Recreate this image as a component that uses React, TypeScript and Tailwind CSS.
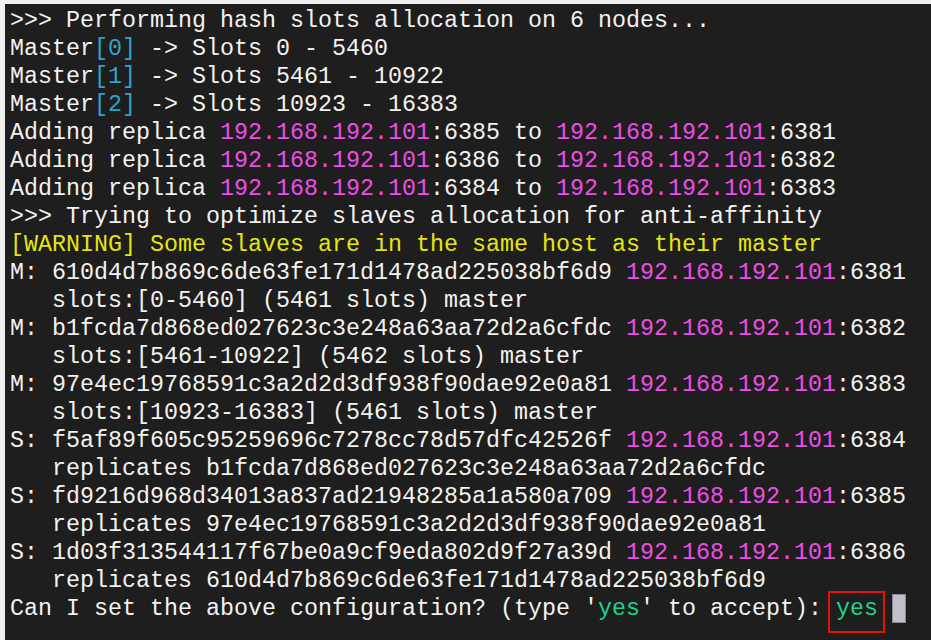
import React from "react";

const W = ({ children }: { children: React.ReactNode }) => <span>{children}</span>;
const C = ({ children }: { children: React.ReactNode }) => <span className="text-[#2ea3d0]">{children}</span>;
const P = ({ children }: { children: React.ReactNode }) => <span className="text-[#ec4dea]">{children}</span>;
const Y = ({ children }: { children: React.ReactNode }) => <span className="text-[#e5e512]">{children}</span>;
const G = ({ children }: { children: React.ReactNode }) => <span className="text-[#23d18b]">{children}</span>;

const IP = "192.168.192.101";

export default function App() {
  const lines: React.ReactNode[] = [
    <W>{">>> Performing hash slots allocation on 6 nodes..."}</W>,
    <>Master<C>[0]</C>{" -> Slots 0 - 5460"}</>,
    <>Master<C>[1]</C>{" -> Slots 5461 - 10922"}</>,
    <>Master<C>[2]</C>{" -> Slots 10923 - 16383"}</>,
    <>{"Adding replica "}<P>{IP}</P>{":6385 to "}<P>{IP}</P>{":6381"}</>,
    <>{"Adding replica "}<P>{IP}</P>{":6386 to "}<P>{IP}</P>{":6382"}</>,
    <>{"Adding replica "}<P>{IP}</P>{":6384 to "}<P>{IP}</P>{":6383"}</>,
    <>{">>> Trying to optimize slaves allocation for anti-affinity"}</>,
    <Y>{"[WARNING] Some slaves are in the same host as their master"}</Y>,
    <>{"M: 610d4d7b869c6de63fe171d1478ad225038bf6d9 "}<P>{IP}</P>{":6381"}</>,
    <>{"   slots:[0-5460] (5461 slots) master"}</>,
    <>{"M: b1fcda7d868ed027623c3e248a63aa72d2a6cfdc "}<P>{IP}</P>{":6382"}</>,
    <>{"   slots:[5461-10922] (5462 slots) master"}</>,
    <>{"M: 97e4ec19768591c3a2d2d3df938f90dae92e0a81 "}<P>{IP}</P>{":6383"}</>,
    <>{"   slots:[10923-16383] (5461 slots) master"}</>,
    <>{"S: f5af89f605c95259696c7278cc78d57dfc42526f "}<P>{IP}</P>{":6384"}</>,
    <>{"   replicates b1fcda7d868ed027623c3e248a63aa72d2a6cfdc"}</>,
    <>{"S: fd9216d968d34013a837ad21948285a1a580a709 "}<P>{IP}</P>{":6385"}</>,
    <>{"   replicates 97e4ec19768591c3a2d2d3df938f90dae92e0a81"}</>,
    <>{"S: 1d03f313544117f67be0a9cf9eda802d9f27a39d "}<P>{IP}</P>{":6386"}</>,
    <>{"   replicates 610d4d7b869c6de63fe171d1478ad225038bf6d9"}</>,
    <>
      {"Can I set the above configuration? (type '"}
      <G>yes</G>
      {"' to accept): "}
      <span className="relative">
        <G>yes</G>
        <span className="absolute left-[-8px] right-[-7px] top-[-5px] bottom-[-11px] border-2 border-[#e41010]" />
      </span>
      {" "}
      <span className="inline-block w-[14px] h-[29px] align-top mt-[-1px] bg-[#c0c0c9] border border-[#8a8a92]" />
    </>,
  ];

  return (
    <div className="w-[931px] h-[640px] bg-[#f0f0f0] pt-[4px] pl-[5px] overflow-hidden">
      <div
        className="w-full h-full bg-[#1e1e1e] text-[#f2f2f2] pl-[5px] pt-[3px] text-[23.33px] leading-[28px] whitespace-pre"
        style={{ fontFamily: '"Liberation Mono", "DejaVu Sans Mono", monospace' }}
      >
        {lines.map((l, i) => (
          <div key={i} className="h-[28px]">
            {l}
          </div>
        ))}
      </div>
    </div>
  );
}
